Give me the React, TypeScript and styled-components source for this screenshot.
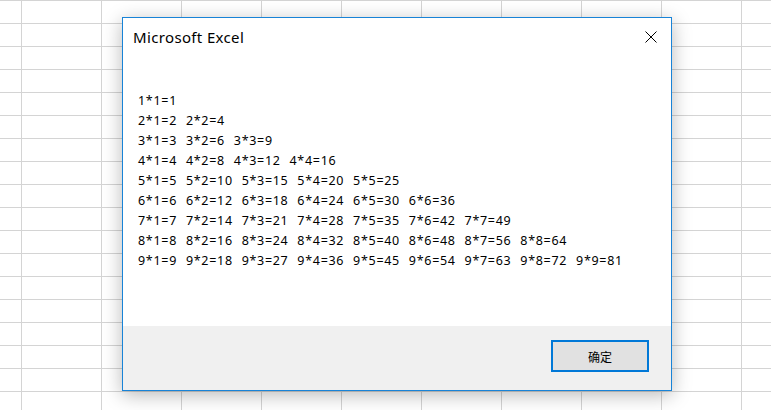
import React from "react";
import styled, { createGlobalStyle } from "styled-components";

const Global = createGlobalStyle`
  html, body { margin: 0; padding: 0; background: #fff; }
  body { width: 771px; height: 410px; overflow: hidden; }
`;

const Sheet = styled.div`
  width: 771px;
  height: 410px;
  box-sizing: border-box;
  padding: 17px 0 0 122px;
  background-color: #fff;
  background-image:
    linear-gradient(to right, #d4d4d4 1px, transparent 1px),
    linear-gradient(to bottom, #d4d4d4 1px, transparent 1px);
  background-size: 80px 23px;
  background-position: 21px 0, 0 0;
`;

const Dialog = styled.div`
  width: 550px;
  height: 374px;
  box-sizing: border-box;
  border: 1px solid #1883d7;
  background: #fff;
  display: flex;
  flex-direction: column;
  box-shadow: 0 4px 18px rgba(0, 0, 0, 0.28);
`;

const TitleBar = styled.div`
  height: 38px;
  display: flex;
  align-items: center;
  justify-content: space-between;
  padding: 0 14px 0 10px;
`;

const Title = styled.span`
  font-family: "Segoe UI", "Noto Sans", sans-serif;
  font-size: 15px;
  letter-spacing: 0.35px;
  color: #000;
`;

const Close = styled.svg`
  width: 12px;
  height: 12px;
  display: block;
`;

const Body = styled.div`
  flex: 1;
  padding: 35px 0 0 15px;
  font-family: "Segoe UI", "Noto Sans", sans-serif;
  font-size: 12.5px;
  letter-spacing: 0.7px;
  word-spacing: 0.5px;
  line-height: 20px;
  color: #000;
  white-space: pre;
`;

const Line = styled.div``;

const Footer = styled.div`
  height: 64px;
  background: #f0f0f0;
  display: flex;
  justify-content: flex-end;
  align-items: flex-start;
  padding: 14px 22px 0 0;
  box-sizing: border-box;
`;

const Button = styled.button`
  width: 98px;
  height: 32px;
  box-sizing: border-box;
  border: 2px solid #0078d7;
  background: #e1e1e1;
  font-family: "Noto Sans CJK SC", sans-serif;
  font-size: 12px;
  color: #000;
  padding: 0;
`;

const lines: string[] = [];
for (let i = 1; i <= 9; i++) {
  let s = "";
  for (let j = 1; j <= i; j++) s += `${i}*${j}=${i * j}  `;
  lines.push(s);
}

export default function App() {
  return (
    <>
      <Global />
      <Sheet>
        <Dialog>
          <TitleBar>
            <Title>Microsoft Excel</Title>
            <Close viewBox="0 0 12 12">
              <path d="M0.5 0.5 L11.5 11.5 M11.5 0.5 L0.5 11.5" stroke="#000" strokeWidth="1" fill="none" />
            </Close>
          </TitleBar>
          <Body>
            {lines.map((l, k) => (
              <Line key={k}>{l}</Line>
            ))}
          </Body>
          <Footer>
            <Button>确定</Button>
          </Footer>
        </Dialog>
      </Sheet>
    </>
  );
}
